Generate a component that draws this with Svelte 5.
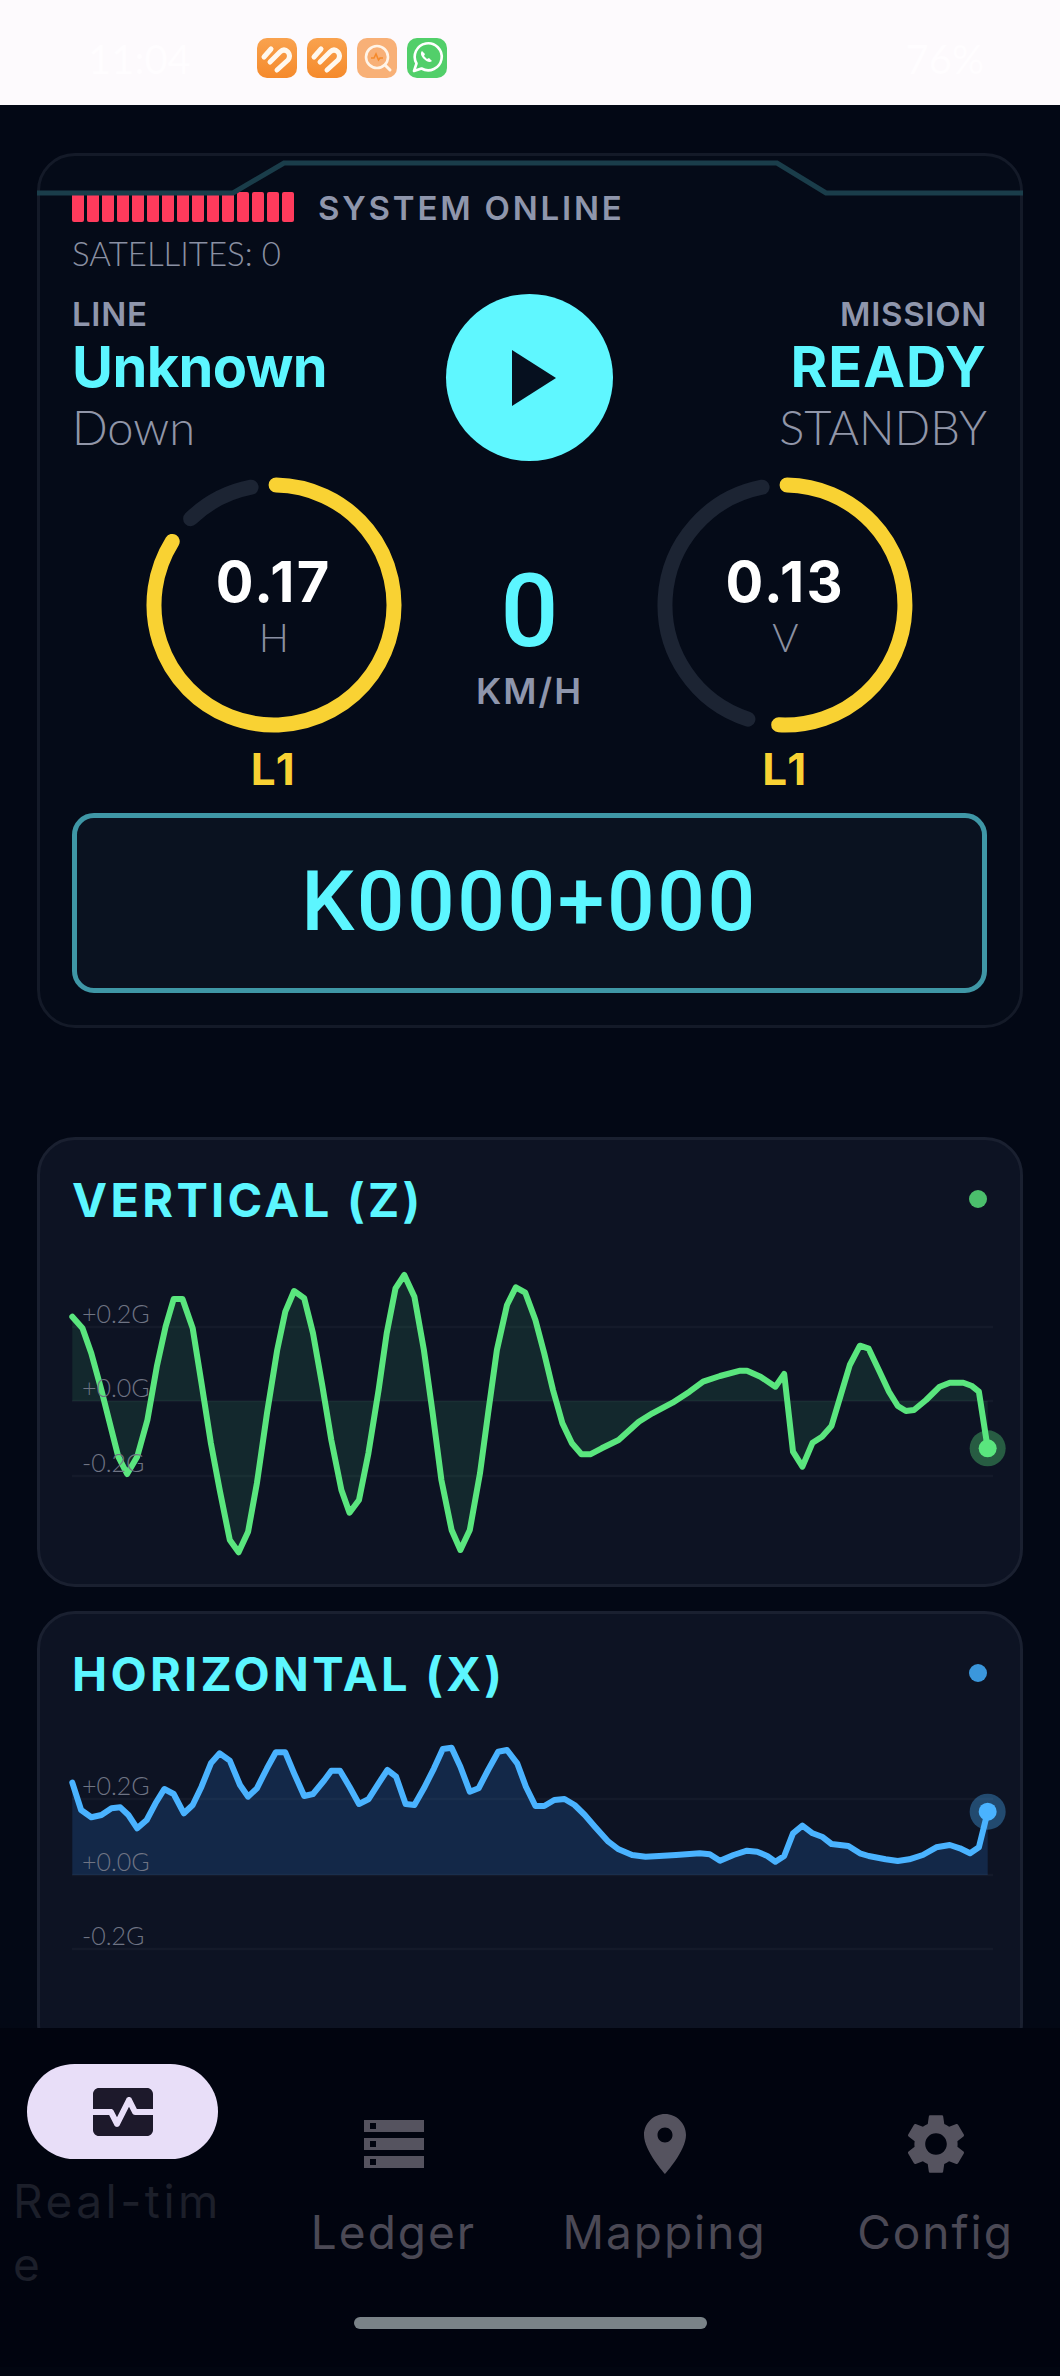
<script>
  // points read off the traces; x and y are chart units, scaled to px by makeChart
  const zTrace = [[107,590],[122,625],[135,700],[150,810],[165,930],[175,1010],[188,1062],[203,1010],[218,900],[232,740],[245,620],[257,537],[270,537],[285,625],[298,790],[312,970],[325,1110],[340,1260],[353,1297],[367,1235],[380,1090],[395,880],[410,690],[422,575],[435,513],[450,535],[463,640],[477,800],[490,960],[505,1110],[517,1178],[531,1140],[545,1000],[560,810],[572,640],[585,505],[598,465],[613,530],[627,690],[640,880],[653,1080],[668,1230],[681,1290],[695,1230],[710,1060],[722,880],[735,690],[750,555],[763,502],[777,518],[792,600],[805,700],[818,810],[832,910],[846,970],[860,1003],[873,1003],[890,985],[915,960],[945,905],[965,880],[995,848],[1020,815],[1040,785],[1065,768],[1095,752],[1105,752],[1125,770],[1147,800],[1160,762],[1173,995],[1187,1040],[1202,968],[1216,950],[1230,918],[1243,830],[1257,735],[1272,677],[1285,686],[1300,750],[1315,815],[1328,858],[1340,873],[1352,870],[1370,840],[1390,800],[1405,788],[1425,788],[1437,797],[1448,815],[1461,985]];
  const xTrace = [[107,548],[120,630],[135,652],[150,645],[165,625],[178,622],[190,645],[203,685],[217,660],[230,610],[243,567],[257,582],[272,640],[285,615],[298,560],[312,490],[325,460],[340,482],[355,555],[367,590],[380,565],[395,505],[408,457],[422,457],[435,520],[450,588],[463,582],[480,540],[490,512],[503,512],[517,560],[531,612],[545,598],[560,550],[573,510],[586,530],[600,612],[613,615],[627,565],[642,505],[655,447],[668,443],[681,500],[695,575],[708,565],[722,510],[737,455],[750,450],[765,490],[778,560],[792,618],[805,618],[820,600],[835,597],[850,615],[865,645],[880,680],[900,725],[915,748],[935,765],[955,770],[975,768],[1000,765],[1035,760],[1050,763],[1065,782],[1085,765],[1105,752],[1120,755],[1135,768],[1147,785],[1160,768],[1173,700],[1187,677],[1202,700],[1216,710],[1230,732],[1255,738],[1272,760],[1285,768],[1310,778],[1328,783],[1345,778],[1365,765],[1385,742],[1405,735],[1420,745],[1435,760],[1448,742],[1461,635]];

  const SX = 1060 / 1568;

  function makeChart(trace, yTop, grid) {
    const pts = trace.map(([x, y]) => [x * SX - 37, y / 3 - yTop]);
    const line = pts.map((p) => p[0].toFixed(1) + ',' + p[1].toFixed(1)).join(' ');
    const base = grid[1];
    const first = pts[0][0].toFixed(1);
    const last = pts[pts.length - 1];
    return {
      line,
      area: `M${first},${base} L${line} L${last[0].toFixed(1)},${base} Z`,
      end: last,
      grid
    };
  }

  const charts = [
    { title: 'VERTICAL (Z)', color: '#5ae67e', dot: '#4bbf6c', fill: 'rgba(74, 222, 128, 0.11)', ...makeChart(zTrace, 116, [91, 165, 240]) },
    { title: 'HORIZONTAL (X)', color: '#4ab3ff', dot: '#3b97dc', fill: 'rgba(56, 150, 255, 0.17)', ...makeChart(xTrace, 110, [89, 165, 239]) }
  ];

  const CX = 135;
  const CY = 135;
  const R = 120;
  function arc(fromDeg, toDeg) {
    const rad = (d) => ((d - 90) * Math.PI) / 180;
    const sx = CX + R * Math.cos(rad(fromDeg));
    const sy = CY + R * Math.sin(rad(fromDeg));
    const ex = CX + R * Math.cos(rad(toDeg));
    const ey = CY + R * Math.sin(rad(toDeg));
    const large = toDeg - fromDeg > 180 ? 1 : 0;
    return `M${sx.toFixed(2)} ${sy.toFixed(2)} A${R} ${R} 0 ${large} 1 ${ex.toFixed(2)} ${ey.toFixed(2)}`;
  }

  const gauges = [
    { value: '0.17', axis: 'H', level: 'L1', on: arc(1, 302), off: arc(316, 349) },
    { value: '0.13', axis: 'V', level: 'L1', on: arc(1, 183), off: arc(198, 349) }
  ];

  const signalBars = Array.from({ length: 15 });
</script>

<div class="phone">
  <div class="statusbar">
    <span class="ghost">11:04</span>
    <div class="apps">
      <svg class="app" viewBox="0 0 40 40">
        <defs>
          <linearGradient id="org" x1="0" y1="0" x2="0" y2="1">
            <stop offset="0" stop-color="#f9a24e" />
            <stop offset="1" stop-color="#f58a2c" />
          </linearGradient>
        </defs>
        <rect width="40" height="40" rx="10" fill="url(#org)" />
        <path d="M7 19L14 11M13 24L23 14Q27 10 31 14Q34 18 31 22L20 32" fill="none" stroke="#fff8ee" stroke-width="5" stroke-linecap="round" stroke-linejoin="round" />
      </svg>
      <svg class="app" viewBox="0 0 40 40">
        <rect width="40" height="40" rx="10" fill="url(#org)" />
        <path d="M7 19L14 11M13 24L23 14Q27 10 31 14Q34 18 31 22L20 32" fill="none" stroke="#fff8ee" stroke-width="5" stroke-linecap="round" stroke-linejoin="round" />
      </svg>
      <svg class="app" viewBox="0 0 40 40">
        <rect width="40" height="40" rx="10" fill="#f8b077" />
        <circle cx="20" cy="19" r="11" fill="none" stroke="#fff4e8" stroke-width="2.6" />
        <path d="M28 27l5 5" stroke="#fff4e8" stroke-width="3" stroke-linecap="round" />
        <path d="M14 20h3l2-4 2.5 6 1.5-2h3" fill="none" stroke="#f58a2c" stroke-width="1.6" />
      </svg>
      <svg class="app" viewBox="0 0 40 40">
        <rect width="40" height="40" rx="10" fill="#52cf6a" />
        <path d="M7 33l2.5-7.5a13.5 13.5 0 1 1 5 5z" fill="none" stroke="#fff" stroke-width="2.6" stroke-linejoin="round" />
        <path d="M15 13c-2 2-1 5 2 8s6 4 8 2l-3-3-2 1-3-3 1-2z" fill="#fff" />
      </svg>
    </div>
    <span class="ghost right">76%</span>
  </div>

  <main class="scroll">
    <section class="hud">
      <svg class="hud-line" viewBox="0 0 986 45" preserveAspectRatio="none">
        <path d="M0 40 H196 L247 10 H740 L789 40 H986" fill="none" stroke="#1a3d4a" stroke-width="5" />
      </svg>

      <div class="signal-row">
        <div class="signal">
          {#each signalBars as _}
            <span></span>
          {/each}
        </div>
        <span class="sys">SYSTEM ONLINE</span>
      </div>
      <div class="sats">SATELLITES: 0</div>

      <div class="mission-row">
        <div class="col">
          <span class="cap">LINE</span>
          <span class="big">Unknown</span>
          <span class="sub">Down</span>
        </div>
        <button class="play" aria-label="Start">
          <svg width="44" height="56" viewBox="0 0 44 56"><path d="M0 0L44 28L0 56Z" fill="#06101f" /></svg>
        </button>
        <div class="col right">
          <span class="cap">MISSION</span>
          <span class="big wide">READY</span>
          <span class="sub">STANDBY</span>
        </div>
      </div>

      <div class="gauges">
        {#snippet gauge(g)}
          <div class="gauge">
            <div class="ring">
              <svg width="270" height="270" viewBox="0 0 270 270">
                <path d={g.off} fill="none" stroke="#1c2433" stroke-width="15" stroke-linecap="round" />
                <path d={g.on} fill="none" stroke="#f9d233" stroke-width="15" stroke-linecap="round" />
              </svg>
              <div class="ring-text">
                <span class="val">{g.value}</span>
                <span class="axis">{g.axis}</span>
              </div>
            </div>
            <span class="level">{g.level}</span>
          </div>
        {/snippet}
        {@render gauge(gauges[0])}
        <div class="speed">
          <span class="speed-val">0</span>
          <span class="speed-unit">KM/H</span>
        </div>
        {@render gauge(gauges[1])}
      </div>

      <div class="station">K0000+000</div>
    </section>

    {#each charts as c}
      <section class="chart-card">
        <div class="chart-head">
          <h2>{c.title}</h2>
          <span class="dot" style="background:{c.dot}"></span>
        </div>
        <div class="plot">
          <svg width="986" height="300" viewBox="0 0 986 300">
            {#each c.grid as y}
              <line x1="35" x2="956" y1={y} y2={y} stroke="#141a2a" stroke-width="2.5" />
            {/each}
            <path d={c.area} fill={c.fill} />
            <polyline points={c.line} fill="none" stroke={c.color} stroke-width="6" stroke-linejoin="round" stroke-linecap="round" />
            <circle cx={c.end[0]} cy={c.end[1]} r="18" fill={c.color} opacity="0.35" />
            <circle cx={c.end[0]} cy={c.end[1]} r="9" fill={c.color} />
          </svg>
          {#each ['+0.2G', '+0.0G', '-0.2G'] as label, i}
            <span class="tick" style="top:{c.grid[i] - 26}px">{label}</span>
          {/each}
        </div>
      </section>
    {/each}
  </main>

  <nav class="tabs">
    <div class="tab active">
      <div class="pill">
        <svg width="72" height="72" viewBox="0 0 24 24" fill="#1d192b">
          <path d="M15.11 12.45 14 10.24l-3.11 6.21c-.16.34-.51.55-.89.55s-.73-.21-.89-.55L7.38 13H2v5c0 1.1.9 2 2 2h16c1.1 0 2-.9 2-2v-5h-6c-.38 0-.73-.21-.89-.55z" />
          <path d="M20 4H4c-1.1 0-2 .9-2 2v5h6c.38 0 .73.21.89.55L10 13.76l3.11-6.21c.34-.68 1.45-.68 1.79 0L16.62 11H22V6c0-1.1-.9-2-2-2z" />
        </svg>
      </div>
      <span class="tab-label wrap">Real-time</span>
    </div>
    <div class="tab">
      <svg width="72" height="72" viewBox="0 0 24 24" fill="#55535f">
        <path d="M2 20h20v-4H2v4zm2-3h2v2H4v-2zM2 4v4h20V4H2zm4 3H4V5h2v2zm-4 7h20v-4H2v4zm2-3h2v2H4v-2z" />
      </svg>
      <span class="tab-label">Ledger</span>
    </div>
    <div class="tab">
      <svg width="72" height="72" viewBox="0 0 24 24" fill="#55535f">
        <path d="M12 2C8.13 2 5 5.13 5 9c0 5.25 7 13 7 13s7-7.75 7-13c0-3.87-3.13-7-7-7zm0 9.5c-1.38 0-2.5-1.12-2.5-2.5s1.12-2.5 2.5-2.5 2.5 1.12 2.5 2.5-1.12 2.5-2.5 2.5z" />
      </svg>
      <span class="tab-label">Mapping</span>
    </div>
    <div class="tab">
      <svg width="72" height="72" viewBox="0 0 24 24" fill="#55535f">
        <path d="M19.14 12.94c.04-.3.06-.61.06-.94 0-.32-.02-.64-.07-.94l2.03-1.58c.18-.14.23-.41.12-.61l-1.92-3.32c-.12-.22-.37-.29-.59-.22l-2.39.96c-.5-.38-1.03-.7-1.62-.94l-.36-2.54c-.04-.24-.24-.41-.48-.41h-3.84c-.24 0-.43.17-.47.41l-.36 2.54c-.59.24-1.13.57-1.62.94l-2.39-.96c-.22-.08-.47 0-.59.22L2.74 8.87c-.12.21-.08.47.12.61l2.03 1.58c-.05.3-.09.63-.09.94s.02.64.07.94l-2.03 1.58c-.18.14-.23.41-.12.61l1.92 3.32c.12.22.37.29.59.22l2.39-.96c.5.38 1.03.7 1.62.94l.36 2.54c.05.24.24.41.48.41h3.84c.24 0 .44-.17.47-.41l.36-2.54c.59-.24 1.13-.56 1.62-.94l2.39.96c.22.08.47 0 .59-.22l1.92-3.32c.12-.22.07-.47-.12-.61l-2.01-1.58zM12 15.6c-1.98 0-3.6-1.62-3.6-3.6s1.62-3.6 3.6-3.6 3.6 1.62 3.6 3.6-1.62 3.6-3.6 3.6z" />
      </svg>
      <span class="tab-label">Config</span>
    </div>
  </nav>
  <div class="home"><span></span></div>
</div>

<style>
  :global(body) {
    margin: 0;
    background: #020611;
  }

  .phone {
    width: 1060px;
    height: 2376px;
    display: flex;
    flex-direction: column;
    overflow: hidden;
    font-family: "Lato", "Liberation Sans", sans-serif;
    background: #020611;
  }

  .statusbar {
    height: 105px;
    flex: none;
    background: #fdfafd;
    display: flex;
    align-items: center;
    padding: 0 76px 0 88px;
    box-sizing: border-box;
  }

  .ghost {
    width: 169px;
    font-size: 40px;
    color: #fffdff;
    margin-top: 12px;
  }

  .ghost.right {
    width: auto;
    margin-left: auto;
  }

  .apps {
    display: flex;
    gap: 10px;
    margin-top: 11px;
  }

  .app {
    width: 40px;
    height: 40px;
  }

  .scroll {
    height: 1923px;
    flex: none;
    overflow: hidden;
    padding: 48px 37px 0;
    box-sizing: border-box;
    background: #030815;
  }

  .hud {
    position: relative;
    height: 875px;
    box-sizing: border-box;
    padding: 36px 33px 0 32px;
    border: 3px solid #141a28;
    border-radius: 38px;
    background: #050b18;
  }

  .hud-line {
    position: absolute;
    left: -3px;
    top: -3px;
    width: 986px;
    height: 45px;
  }

  .signal-row {
    display: flex;
    align-items: center;
    gap: 24px;
    height: 30px;
  }

  .signal {
    display: flex;
    gap: 3px;
  }

  .signal span {
    width: 12px;
    height: 30px;
    border-radius: 2px;
    background: #ff3b5c;
  }

  .sys {
    font-family: "Inter", sans-serif;
    font-size: 33px;
    font-weight: 600;
    color: #8f96ac;
    letter-spacing: 2.8px;
    position: relative;
    top: 1px;
  }

  .sats {
    margin-top: 13px;
    font-size: 33px;
    line-height: 36px;
    font-weight: 300;
    color: #8a90a2;
  }

  .mission-row {
    display: flex;
    justify-content: space-between;
    margin-top: 23px;
    position: relative;
    height: 176px;
  }

  .col {
    display: flex;
    flex-direction: column;
  }

  .col.right {
    align-items: flex-end;
  }

  .cap {
    font-family: "Inter", sans-serif;
    font-size: 33px;
    line-height: 41px;
    font-weight: 600;
    color: #8f96ac;
    letter-spacing: 0.7px;
  }

  .big {
    font-family: "Inter", sans-serif;
    font-size: 56px;
    line-height: 64px;
    font-weight: 700;
    color: #5cf6ff;
    letter-spacing: -0.6px;
  }

  .big.wide {
    letter-spacing: 1px;
  }

  .sub {
    font-size: 47px;
    line-height: 56px;
    font-weight: 300;
    color: #9196a8;
  }

  .play {
    position: absolute;
    left: 374px;
    top: 0;
    width: 167px;
    height: 167px;
    border: 0;
    border-radius: 50%;
    background: #5ff7ff;
    display: flex;
    align-items: center;
    justify-content: center;
    padding: 0 0 0 8px;
  }

  .gauges {
    display: flex;
    justify-content: center;
  }

  .gauge {
    width: 270px;
    display: flex;
    flex-direction: column;
    align-items: center;
  }

  .ring {
    position: relative;
    width: 270px;
    height: 270px;
  }

  .ring svg {
    display: block;
  }

  .ring-text {
    position: absolute;
    inset: 0;
    display: flex;
    flex-direction: column;
    align-items: center;
    padding-top: 82px;
    box-sizing: border-box;
  }

  .val {
    font-family: "Inter", sans-serif;
    font-size: 56px;
    line-height: 60px;
    font-weight: 700;
    color: #fff;
    letter-spacing: 2.4px;
  }

  .axis {
    font-size: 40px;
    line-height: 50px;
    font-weight: 300;
    color: #8a90a2;
  }

  .level {
    font-family: "Inter", sans-serif;
    font-size: 44px;
    line-height: 48px;
    font-weight: 700;
    color: #f9d233;
    letter-spacing: 2px;
    margin-top: 4.5px;
  }

  .speed {
    width: 241.5px;
    display: flex;
    flex-direction: column;
    align-items: center;
    padding-top: 86px;
  }

  .speed-val {
    font-family: "Roboto", sans-serif;
    font-size: 102px;
    line-height: 110px;
    font-weight: 500;
    color: #5cf6ff;
  }

  .speed-unit {
    font-family: "Inter", sans-serif;
    font-size: 36px;
    line-height: 44px;
    font-weight: 600;
    color: #8f96ac;
    letter-spacing: 2px;
    margin-top: 2.5px;
  }

  .station {
    margin-top: 20px;
    height: 180px;
    box-sizing: border-box;
    border: 5px solid #3f97a6;
    border-radius: 22px;
    background: #0a1220;
    display: flex;
    align-items: center;
    justify-content: center;
    font-family: "Roboto", sans-serif;
    font-size: 84px;
    font-weight: 500;
    letter-spacing: 2.5px;
    color: #5cf6ff;
    padding-bottom: 2px;
  }

  .chart-card {
    margin-top: 24px;
    height: 450px;
    box-sizing: border-box;
    border: 3px solid #1a2030;
    border-radius: 38px;
    background: #0d1323;
  }

  .hud + .chart-card {
    margin-top: 109px;
  }

  .chart-head {
    display: flex;
    align-items: center;
    justify-content: space-between;
    padding: 22px 33px 0 32px;
    height: 74px;
  }

  h2 {
    margin: 0;
    font-family: "Inter", sans-serif;
    font-size: 47px;
    font-weight: 700;
    letter-spacing: 3.3px;
    color: #5cf6ff;
  }

  .dot {
    width: 18px;
    height: 18px;
    border-radius: 50%;
  }

  .plot {
    position: relative;
    margin-left: -3px;
    width: 986px;
    height: 300px;
  }

  .plot svg {
    display: block;
    overflow: visible;
  }

  .tick {
    position: absolute;
    left: 45px;
    font-size: 25px;
    line-height: 24px;
    font-weight: 300;
    color: #6f7484;
  }

  .tabs {
    height: 298px;
    flex: none;
    box-sizing: border-box;
    padding: 36px 29px 0 27px;
    display: grid;
    grid-template-columns: repeat(4, 191px);
    column-gap: 80px;
    background: #01040f;
  }

  .tab {
    display: flex;
    flex-direction: column;
    align-items: center;
    padding-top: 44px;
  }

  .tab.active {
    padding-top: 0;
    align-items: flex-start;
  }

  .pill {
    width: 191px;
    height: 95px;
    border-radius: 48px;
    background: #e8def8;
    display: flex;
    align-items: center;
    justify-content: center;
  }

  .tab-label {
    font-family: "Inter", sans-serif;
    font-size: 46px;
    line-height: 63px;
    letter-spacing: 2px;
    color: #4b4955;
    margin-top: 21px;
    white-space: nowrap;
  }

  .wrap {
    margin: 11px 0 0 -14px;
    width: 212px;
    white-space: normal;
    word-break: break-all;
    letter-spacing: 3.5px;
    color: #1c1f2a;
  }

  .home {
    height: 50px;
    flex: none;
    background: #01040f;
    display: flex;
    justify-content: center;
    margin-top: -9px;
  }

  .home span {
    width: 353px;
    height: 12px;
    border-radius: 6px;
    background: #7a8388;
  }
</style>
